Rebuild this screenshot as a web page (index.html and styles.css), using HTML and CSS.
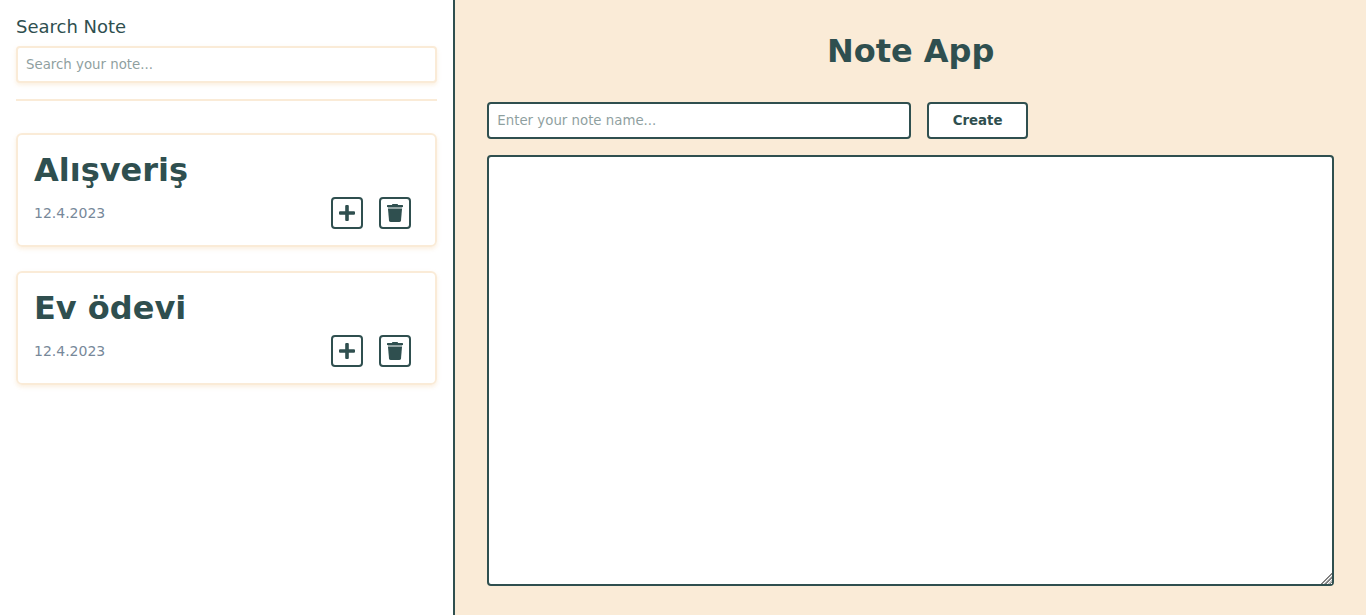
FILE: index.html
```
<!DOCTYPE html>
<html lang="tr">
<head>
<meta charset="utf-8">
<meta name="viewport" content="width=device-width, initial-scale=1">
<title>Note App</title>
<link rel="stylesheet" href="styles.css">
</head>
<body>
<div class="app">
  <aside class="sidebar">
    <div class="search">
      <label class="search-label" for="search">Search Note</label>
      <input class="field search-field" id="search" type="text" placeholder="Search your note...">
    </div>
    <div class="notes">
      <article class="note">
        <h2 class="title">Alışveriş</h2>
        <div class="note-footer">
          <time class="note-date" datetime="2023-04-12">12.4.2023</time>
          <div class="note-actions">
            <button class="icon-button" type="button" aria-label="Open note">
              <svg class="icon" viewBox="0 0 16 16"><path d="M6.2 1Q6.2 0 7.2 0H8.8Q9.8 0 9.8 1V6.2H15Q16 6.2 16 7.2V8.8Q16 9.8 15 9.8H9.8V15Q9.8 16 8.8 16H7.2Q6.2 16 6.2 15V9.8H1Q0 9.8 0 8.8V7.2Q0 6.2 1 6.2H6.2Z"/></svg>
            </button>
            <button class="icon-button" type="button" aria-label="Delete note">
              <svg class="icon icon-trash" viewBox="0 0 16 18"><path d="M0 1.6Q0 1 .6 1H5V.8Q5 0 5.8 0H10.2Q11 0 11 .8V1H15.4Q16 1 16 1.6V3H0Z"/><path class="icon-shade" d="M.8 3H15.2L15 5H1Z"/><path d="M1 5H15L14 16.4Q13.8 18 12.2 18H3.8Q2.2 18 2 16.4Z"/></svg>
            </button>
          </div>
        </div>
      </article>
      <article class="note">
        <h2 class="title">Ev ödevi</h2>
        <div class="note-footer">
          <time class="note-date" datetime="2023-04-12">12.4.2023</time>
          <div class="note-actions">
            <button class="icon-button" type="button" aria-label="Open note">
              <svg class="icon" viewBox="0 0 16 16"><path d="M6.2 1Q6.2 0 7.2 0H8.8Q9.8 0 9.8 1V6.2H15Q16 6.2 16 7.2V8.8Q16 9.8 15 9.8H9.8V15Q9.8 16 8.8 16H7.2Q6.2 16 6.2 15V9.8H1Q0 9.8 0 8.8V7.2Q0 6.2 1 6.2H6.2Z"/></svg>
            </button>
            <button class="icon-button" type="button" aria-label="Delete note">
              <svg class="icon icon-trash" viewBox="0 0 16 18"><path d="M0 1.6Q0 1 .6 1H5V.8Q5 0 5.8 0H10.2Q11 0 11 .8V1H15.4Q16 1 16 1.6V3H0Z"/><path class="icon-shade" d="M.8 3H15.2L15 5H1Z"/><path d="M1 5H15L14 16.4Q13.8 18 12.2 18H3.8Q2.2 18 2 16.4Z"/></svg>
            </button>
          </div>
        </div>
      </article>
    </div>
  </aside>
  <main class="editor">
    <h1 class="title editor-title">Note App</h1>
    <form class="editor-form">
      <div class="editor-row">
        <input class="field name-field" type="text" aria-label="Note name" placeholder="Enter your note name...">
        <button class="create-button" type="button">Create</button>
      </div>
      <textarea class="editor-text" aria-label="Note text"></textarea>
    </form>
  </main>
</div>
</body>
</html>
```

FILE: styles.css
```
:root {
  --ink: darkslategray;
  --cream: antiquewhite;
}

* {
  box-sizing: border-box;
  margin: 0;
}

body,
input,
button,
textarea {
  font-family: "DejaVu Sans", sans-serif;
  color: var(--ink);
}

.app {
  display: grid;
  grid-template-columns: 1fr 2fr;
  min-height: 100vh;
}

.sidebar {
  padding: 16px;
  background: white;
  border-right: 2px solid var(--ink);
}

.search {
  display: flex;
  flex-direction: column;
  gap: 8px;
  padding-bottom: 16px;
  border-bottom: 2px solid var(--cream);
}

.search-label {
  font-size: 18px;
  line-height: 22px;
}

.field {
  height: 37px;
  padding: 8px;
  background: white;
  border: 2px solid var(--ink);
  border-radius: 4px;
}

.field::placeholder {
  color: var(--ink);
  opacity: 0.54;
}

.search-field {
  border-color: var(--cream);
  box-shadow: 0 2px 4px rgb(250 235 215 / 80%);
}

.notes {
  display: flex;
  flex-direction: column;
  gap: 24px;
  margin-top: 32px;
}

.note {
  display: flex;
  flex-direction: column;
  gap: 8px;
  padding: 16px;
  border: 2px solid var(--cream);
  border-radius: 6px;
  box-shadow: 0 2px 4px rgb(250 235 215 / 80%);
}

.title {
  font-size: 32px;
  line-height: 38px;
}

.note-footer {
  display: flex;
  align-items: center;
  justify-content: space-between;
  padding-right: 8px;
}

.note-date {
  font-size: 14px;
  color: lightslategray;
}

.note-actions {
  display: flex;
  gap: 16px;
}

.icon-button {
  display: grid;
  place-items: center;
  width: 32px;
  height: 32px;
  padding: 0;
  background: white;
  border: 2px solid var(--ink);
  border-radius: 4px;
}

.icon {
  display: block;
  width: 16px;
  height: 16px;
  fill: var(--ink);
}

.icon-trash {
  height: 18px;
}

.icon-shade {
  opacity: 0.5;
}

.editor {
  display: flex;
  flex-direction: column;
  gap: 32px;
  padding: 32px;
  background: var(--cream);
}

.editor-title {
  text-align: center;
}

.editor-form {
  display: flex;
  flex-direction: column;
  gap: 16px;
}

.editor-row {
  display: flex;
  gap: 16px;
}

.name-field {
  width: 50%;
}

.create-button {
  padding: 8px 24px;
  font-weight: bold;
  background: white;
  border: 2px solid var(--ink);
  border-radius: 4px;
}

.editor-text {
  height: 70vh;
  padding: 16px;
  background: white;
  border: 2px solid var(--ink);
  border-radius: 4px;
  resize: both;
}

.editor-text::-webkit-resizer {
  background:
    linear-gradient(135deg, white 62%, transparent 62%),
    repeating-linear-gradient(-45deg, white 0 1px, gray 1px 2px, silver 2px 3px);
}
```
